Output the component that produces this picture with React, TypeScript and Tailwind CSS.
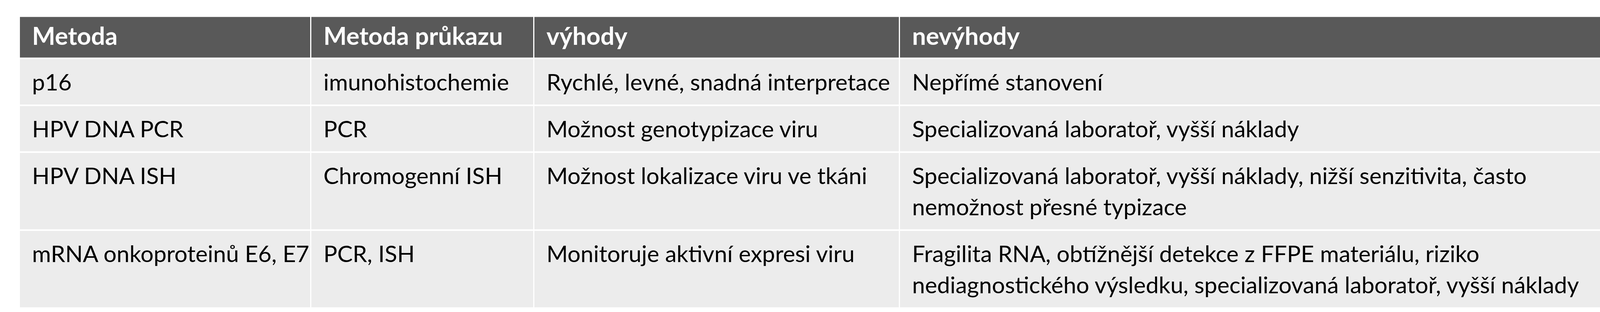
import { Fragment } from "react";

const rows: { metoda: string; prukaz: string; vyhody: string; nevyhody: string[] }[] = [
  { metoda: "p16", prukaz: "imunohistochemie", vyhody: "Rychlé, levné, snadná interpretace", nevyhody: ["Nepřímé stanovení"] },
  { metoda: "HPV DNA PCR", prukaz: "PCR", vyhody: "Možnost genotypizace viru", nevyhody: ["Specializovaná laboratoř, vyšší náklady"] },
  {
    metoda: "HPV DNA ISH",
    prukaz: "Chromogenní ISH",
    vyhody: "Možnost lokalizace viru ve tkáni",
    nevyhody: ["Specializovaná laboratoř, vyšší náklady, nižší senzitivita, často", "nemožnost přesné typizace"],
  },
  {
    metoda: "mRNA onkoproteinů E6, E7",
    prukaz: "PCR, ISH",
    vyhody: "Monitoruje aktivní expresi viru",
    nevyhody: [
      "Fragilita RNA, obtížnější detekce z FFPE materiálu, riziko",
      "nediagnostického výsledku, specializovaná laboratoř, vyšší náklady",
    ],
  },
];

const headers = ["Metoda", "Metoda průkazu", "výhody", "nevýhody"];

const cell = "bg-[#ececec] px-[31px] py-[18px] text-[59px] leading-[80px] whitespace-nowrap text-black";

export default function App() {
  return (
    <div className="h-[800px] w-[4167px] bg-white pl-[51px] pt-[43px] font-['Lato',sans-serif]">
      <div className="grid w-[4047px] grid-cols-[743px_568px_933px_1794px] gap-x-[3px] gap-y-[4px]">
        {headers.map(h => (
          <div
            key={h}
            className="flex h-[105px] items-center border-y border-[#a3a3a3] bg-[#595959] px-[31px] pb-[8px] text-[63px] font-bold whitespace-nowrap text-white"
          >
            {h}
          </div>
        ))}
        {rows.map(r => (
          <Fragment key={r.metoda}>
            <div className={cell}>{r.metoda}</div>
            <div className={cell}>{r.prukaz}</div>
            <div className={cell}>{r.vyhody}</div>
            <div className={cell}>
              {r.nevyhody.map(line => (
                <div key={line}>{line}</div>
              ))}
            </div>
          </Fragment>
        ))}
      </div>
    </div>
  );
}
